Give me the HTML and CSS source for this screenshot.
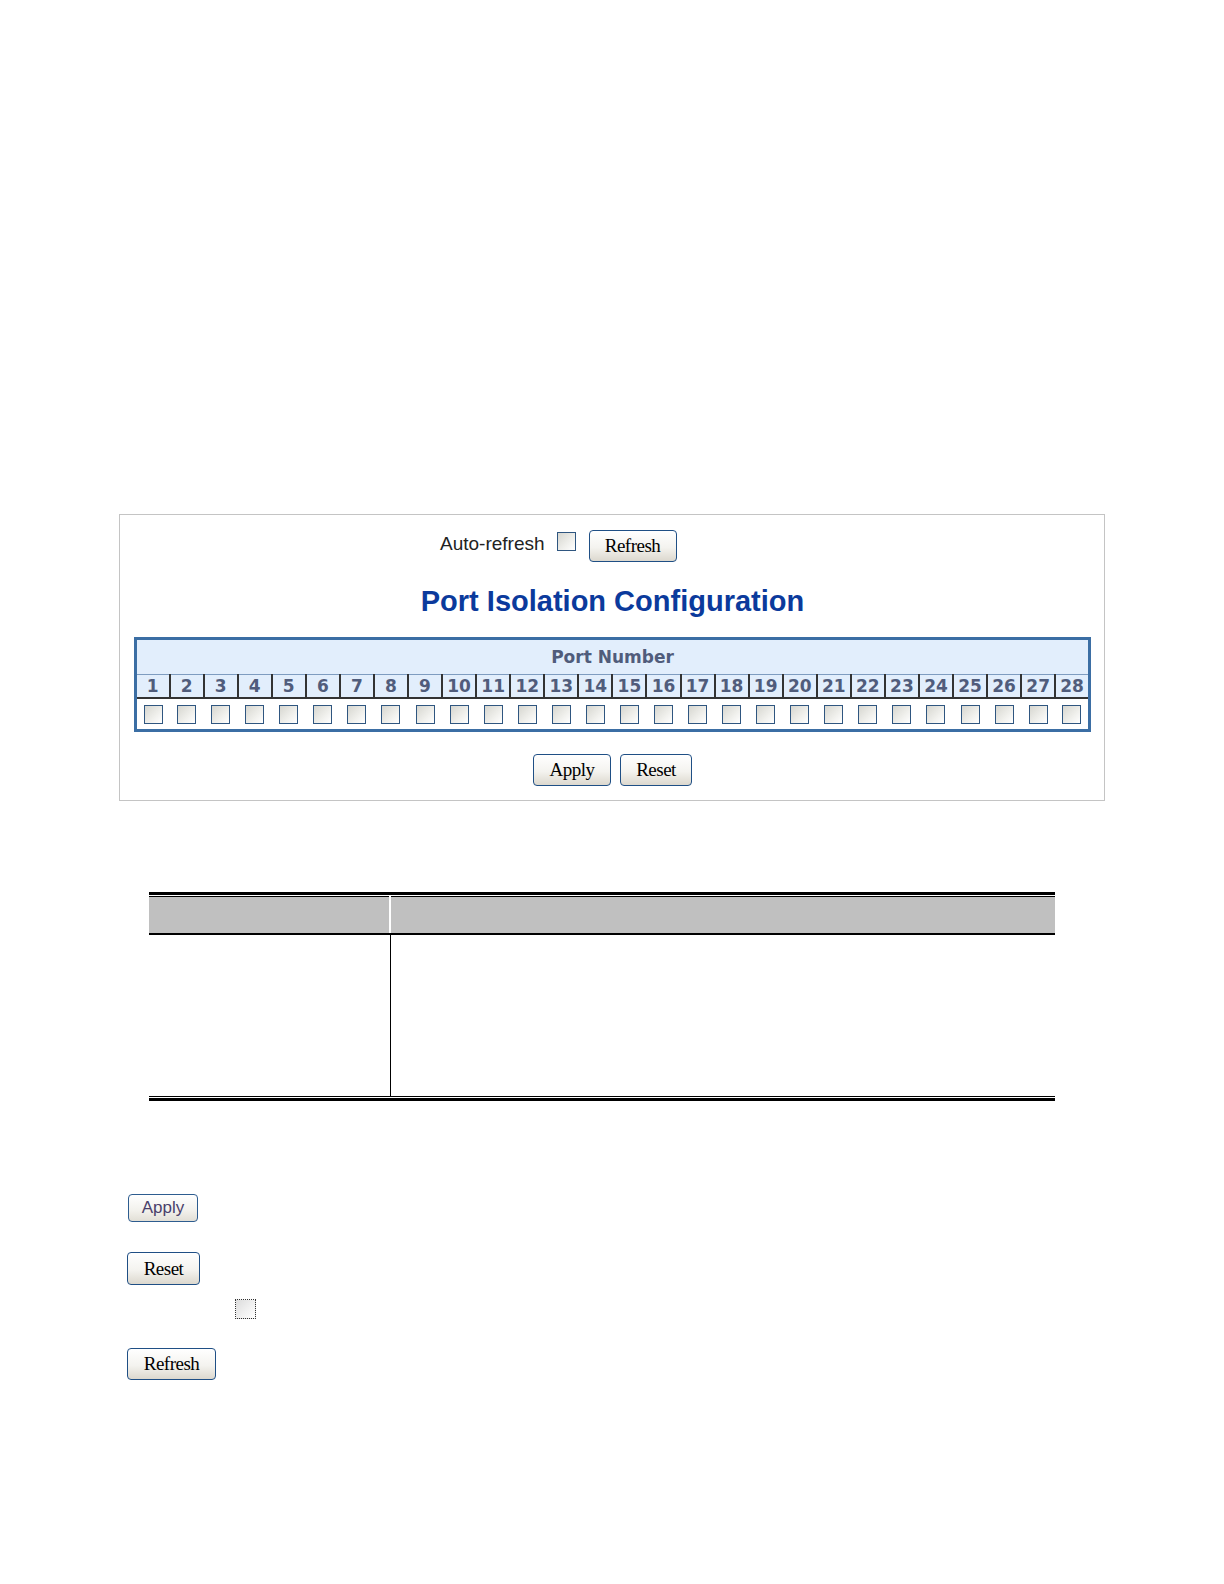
FILE: index.html
```html
<!DOCTYPE html>
<html lang="en">
<head>
    <meta charset="UTF-8">
    <meta name="viewport" content="width=device-width, initial-scale=1.0">
    <title>Port Isolation Configuration</title>
    <link rel="stylesheet" href="styles.css">
</head>
<body>
    <div class="panel">
        <div class="refresh-bar">
            <label for="autorefresh">Auto-refresh</label>
            <input type="checkbox" id="autorefresh" class="chk chk-auto">
            <button class="btn btn-refresh">Refresh</button>
        </div>

        <h1>Port Isolation Configuration</h1>

        <table class="ports">
            <thead>
                <tr><th colspan="28">Port Number</th></tr>
            </thead>
            <tbody>
                <tr class="nums">
                    <td>1</td><td>2</td><td>3</td><td>4</td><td>5</td><td>6</td><td>7</td>
                    <td>8</td><td>9</td><td>10</td><td>11</td><td>12</td><td>13</td><td>14</td>
                    <td>15</td><td>16</td><td>17</td><td>18</td><td>19</td><td>20</td><td>21</td>
                    <td>22</td><td>23</td><td>24</td><td>25</td><td>26</td><td>27</td><td>28</td>
                </tr>
                <tr class="checks">
                    <td><input type="checkbox" class="chk"></td><td><input type="checkbox" class="chk"></td>
                    <td><input type="checkbox" class="chk"></td><td><input type="checkbox" class="chk"></td>
                    <td><input type="checkbox" class="chk"></td><td><input type="checkbox" class="chk"></td>
                    <td><input type="checkbox" class="chk"></td><td><input type="checkbox" class="chk"></td>
                    <td><input type="checkbox" class="chk"></td><td><input type="checkbox" class="chk"></td>
                    <td><input type="checkbox" class="chk"></td><td><input type="checkbox" class="chk"></td>
                    <td><input type="checkbox" class="chk"></td><td><input type="checkbox" class="chk"></td>
                    <td><input type="checkbox" class="chk"></td><td><input type="checkbox" class="chk"></td>
                    <td><input type="checkbox" class="chk"></td><td><input type="checkbox" class="chk"></td>
                    <td><input type="checkbox" class="chk"></td><td><input type="checkbox" class="chk"></td>
                    <td><input type="checkbox" class="chk"></td><td><input type="checkbox" class="chk"></td>
                    <td><input type="checkbox" class="chk"></td><td><input type="checkbox" class="chk"></td>
                    <td><input type="checkbox" class="chk"></td><td><input type="checkbox" class="chk"></td>
                    <td><input type="checkbox" class="chk"></td><td><input type="checkbox" class="chk"></td>
                </tr>
            </tbody>
        </table>

        <div class="actions">
            <button class="btn btn-apply">Apply</button>
            <button class="btn btn-reset">Reset</button>
        </div>
    </div>

    <div class="spec">
        <table>
            <tr><th class="col-obj"></th><th></th></tr>
            <tr><td class="col-obj"></td><td></td></tr>
        </table>
    </div>

    <div class="legend">
        <button class="btn-new">Apply</button>
        <button class="btn btn-reset legend-reset">Reset</button>
        <span class="chk-dotted"></span>
        <button class="btn btn-refresh legend-refresh">Refresh</button>
    </div>
</body>
</html>
```

FILE: styles.css
```css
body {
    margin: 0;
    background-color: #fff;
    font-family: "Liberation Sans", Arial, sans-serif;
    color: #222;
}

.panel {
    box-sizing: border-box;
    width: 986px;
    margin: 514px 0 0 119px;
    padding: 15px 13px 14px 14px;
    border: 1px solid #c4c4c4;
}

.refresh-bar {
    display: flex;
    align-items: center;
    height: 32px;
    padding-left: 306px;
    font-size: 19px;
}

.refresh-bar label {
    margin: 0 12px 4px 0;
}

.chk {
    appearance: none;
    -webkit-appearance: none;
    box-sizing: border-box;
    width: 19px;
    height: 19px;
    margin: 0;
    border: 1px solid #2f5680;
    background: linear-gradient(135deg, #d6d6d0 0%, #eeeeea 55%, #fff 100%);
    vertical-align: middle;
}

.chk-auto {
    align-self: flex-start;
    margin: 2px 13px 0 0;
}

h1 {
    margin: 22px 0 19px;
    font-size: 29px;
    line-height: 34px;
    text-align: center;
    color: #0b3a9c;
}

.ports {
    width: 100%;
    table-layout: fixed;
    border-collapse: collapse;
    border: 3px solid #3b6ea4;
    font-family: "DejaVu Sans", Verdana, sans-serif;
    font-weight: bold;
    font-size: 17px;
    color: #505c7b;
}

.ports th {
    height: 34px;
    padding: 0;
    background-color: #e2eefc;
    border-bottom: 1px solid #7e9cc0;
}

.ports .nums td {
    height: 22px;
    padding: 0;
    line-height: 20px;
    text-align: center;
    background-color: #e2eefc;
    border-bottom: 2px solid #333;
}

.ports .nums td + td {
    border-left: 2px solid #333;
}

.ports .checks td {
    height: 30px;
    padding: 0;
    text-align: center;
    background-color: #fff;
}

.btn {
    box-sizing: border-box;
    height: 32px;
    padding: 0;
    font-family: "Liberation Serif", "Times New Roman", serif;
    font-size: 19px;
    letter-spacing: -0.5px;
    color: #000;
    border: 1px solid #1f4f85;
    border-radius: 4px;
    background: linear-gradient(#fff 0%, #f4f3ef 55%, #dcd8ce 100%);
    cursor: pointer;
}

.btn-refresh {
    width: 88px;
}

.btn-apply {
    width: 78px;
}

.btn-reset {
    width: 72px;
}

.actions {
    display: flex;
    justify-content: center;
    gap: 9px;
    margin-top: 22px;
}

.spec {
    width: 906px;
    margin: 91px 0 0 149px;
    padding: 1px 0;
    border-top: 3px solid #000;
    border-bottom: 3px solid #000;
}

.spec table {
    width: 100%;
    border-collapse: collapse;
    border-top: 1px solid #000;
    border-bottom: 1px solid #000;
}

.spec th {
    height: 36px;
    padding: 0;
    background-color: #c0c0c0;
    border-bottom: 2px solid #000;
}

.spec th.col-obj {
    width: 240px;
    border-right: 2px solid #fff;
}

.spec td {
    height: 161px;
    padding: 0;
}

.spec td.col-obj {
    border-right: 1px solid #000;
}

.legend {
    display: flex;
    flex-direction: column;
    align-items: flex-start;
    margin: 93px 0 0 127px;
}

.btn-new {
    box-sizing: border-box;
    width: 70px;
    height: 28px;
    margin-left: 1px;
    padding: 0;
    font-family: "Liberation Sans", Arial, sans-serif;
    font-size: 17px;
    color: #4a3f6b;
    border: 1px solid #2d5c8f;
    border-radius: 4px;
    background: linear-gradient(#fff 0%, #f2f1ec 60%, #e2dfd6 100%);
}

.legend-reset {
    width: 73px;
    height: 33px;
    margin-top: 30px;
}

.chk-dotted {
    box-sizing: border-box;
    width: 21px;
    height: 20px;
    margin: 14px 0 0 108px;
    border: 1px dotted #333;
    background: linear-gradient(135deg, #dcdcdc 0%, #f2f2f2 60%, #fff 100%);
}

.legend-refresh {
    width: 89px;
    margin-top: 29px;
}
```
